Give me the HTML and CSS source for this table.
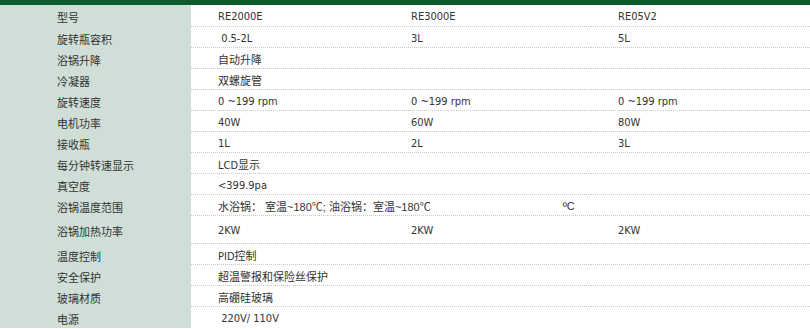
FILE: index.html
```html
<!DOCTYPE html>
<html lang="zh">
<head>
<meta charset="utf-8">
<link rel="stylesheet" href="styles.css">
</head>
<body>
<div class="topbar"></div>
<div class="spec">
  <div class="row first"><div class="label">型号</div><div class="cell">RE2000E</div><div class="cell">RE3000E</div><div class="cell">RE05V2</div></div>
  <div class="row"><div class="label">旋转瓶容积</div><div class="cell">&nbsp;0.5-2L</div><div class="cell">3L</div><div class="cell">5L</div></div>
  <div class="row"><div class="label">浴锅升降</div><div class="cell">自动升降</div><div class="cell"></div><div class="cell"></div></div>
  <div class="row"><div class="label">冷凝器</div><div class="cell">双螺旋管</div><div class="cell"></div><div class="cell"></div></div>
  <div class="row"><div class="label">旋转速度</div><div class="cell">0 ~199 rpm</div><div class="cell">0 ~199 rpm</div><div class="cell">0 ~199 rpm</div></div>
  <div class="row"><div class="label">电机功率</div><div class="cell">40W</div><div class="cell">60W</div><div class="cell">80W</div></div>
  <div class="row"><div class="label">接收瓶</div><div class="cell">1L</div><div class="cell">2L</div><div class="cell">3L</div></div>
  <div class="row"><div class="label">每分钟转速显示</div><div class="cell">LCD显示</div><div class="cell"></div><div class="cell"></div></div>
  <div class="row"><div class="label">真空度</div><div class="cell">&lt;399.9pa</div><div class="cell"></div><div class="cell"></div></div>
  <div class="row"><div class="label">浴锅温度范围</div><div class="cell wide"><span class="plain">水浴锅：&nbsp;室温~180℃; 油浴锅：室温~180℃</span><span class="unit">ºC</span></div></div>
  <div class="row tall"><div class="label">浴锅加热功率</div><div class="cell">2KW</div><div class="cell">2KW</div><div class="cell">2KW</div></div>
  <div class="row"><div class="label">温度控制</div><div class="cell">PID控制</div><div class="cell"></div><div class="cell"></div></div>
  <div class="row"><div class="label">安全保护</div><div class="cell">超温警报和保险丝保护</div><div class="cell"></div><div class="cell"></div></div>
  <div class="row"><div class="label">玻璃材质</div><div class="cell">高硼硅玻璃</div><div class="cell"></div><div class="cell"></div></div>
  <div class="row last"><div class="label">电源</div><div class="cell">&nbsp;220V/ 110V</div><div class="cell"></div><div class="cell"></div></div>
</div>
</body>
</html>
```
FILE: styles.css
```css
html, body {
  margin: 0;
  padding: 0;
  background: #ffffff;
}
body {
  font-family: "Liberation Sans Narrow", "DejaVu Sans Condensed", "Noto Sans CJK SC", sans-serif;
  font-size: 11px;
  color: #333333;
}
.topbar {
  height: 5px;
  background: #0c5a2d;
}
.spec {
  display: flex;
  flex-direction: column;
}
.row {
  display: grid;
  grid-template-columns: 191px 193px 207px 1fr;
  height: 21px;
}
.row.first {
  height: 22px;
}
.row.tall {
  height: 28px;
}
.label {
  background: #cfdfd7;
  padding: 2px 0 0 57px;
  display: flex;
  align-items: center;
  font-family: "Noto Sans CJK SC", sans-serif;
  font-size: 11px;
  color: #333;
}
.cell {
  display: flex;
  align-items: center;
  padding: 2px 0 0 27px;
  border-bottom: 1px dotted #c8c8c8;
  box-sizing: border-box;
  white-space: pre;
}
.row.last .cell {
  border-bottom: none;
}
.cell.wide {
  grid-column: 2 / 5;
}
.plain {
  font-family: "Liberation Sans", "Noto Sans CJK SC", sans-serif;
  font-size: 11px;
}
.unit {
  font-family: "Liberation Sans", sans-serif;
  margin-left: 132px;
}
```
